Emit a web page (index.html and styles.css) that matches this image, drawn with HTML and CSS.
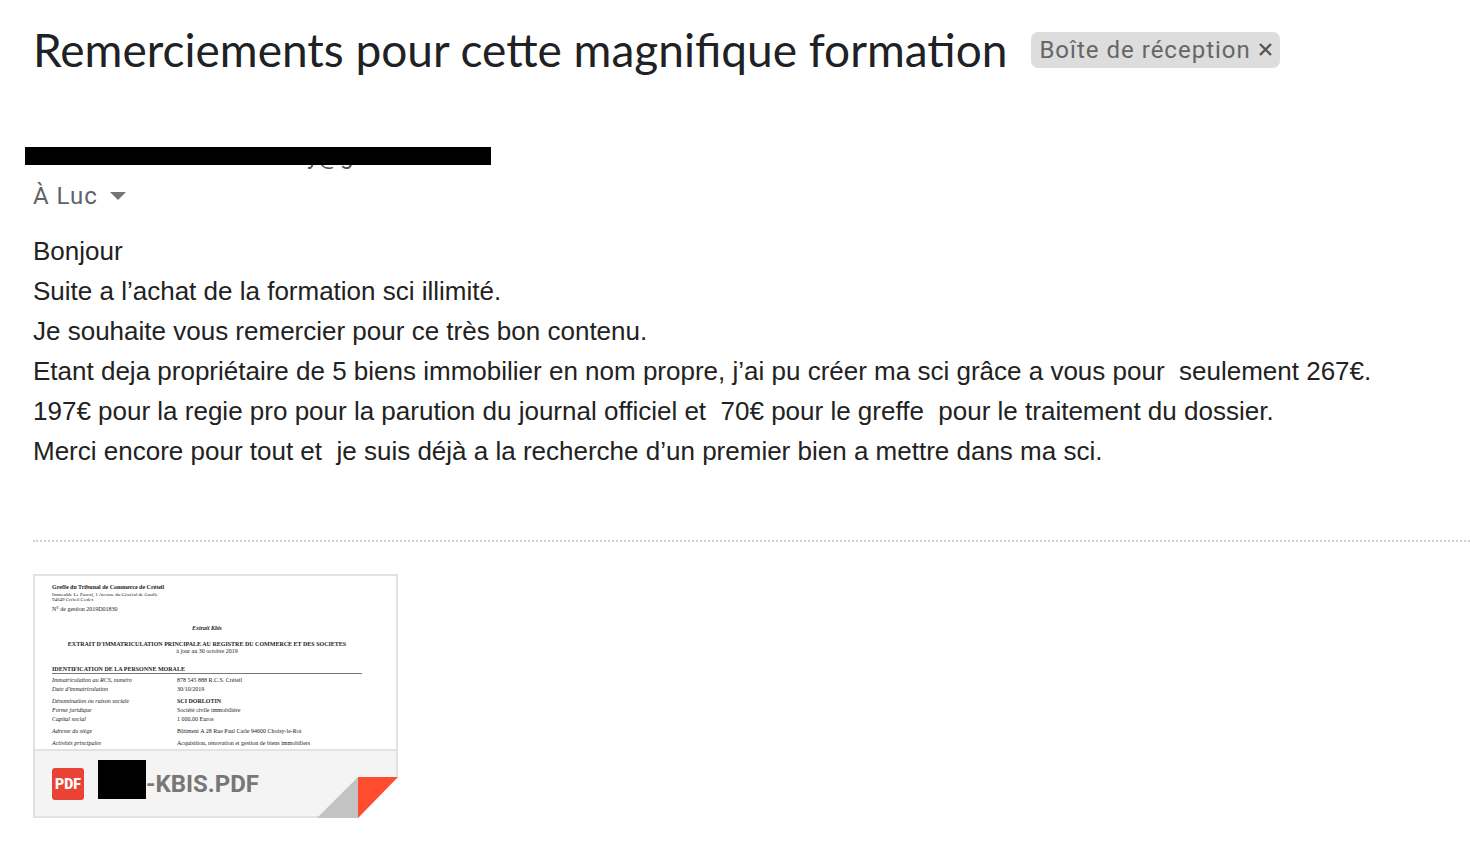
FILE: index.html
```
<!DOCTYPE html>
<html lang="fr">
  <head>
    <meta charset="utf-8">
    <title>Remerciements pour cette magnifique formation</title>
    <link rel="stylesheet" href="styles.css">
  </head>
  <body>
    <div class="mail">
      <header class="subject">
        <h1>Remerciements pour cette magnifique formation</h1>
        <div class="label">
          <span>Boîte de réception</span>
          <button type="button" aria-label="Retirer le libellé">
            <svg width="13" height="13" viewBox="0 0 13 13"><path d="M1 1L12 12M12 1L1 12" stroke="#555" stroke-width="2.4"/></svg>
          </button>
        </div>
      </header>

      <div class="sender">
        <span class="address">y@g</span>
        <div class="mask"></div>
      </div>
      <div class="recipient">
        <span>À Luc</span>
        <button type="button" aria-label="Afficher les détails">
          <svg width="16" height="8" viewBox="0 0 16 8"><path d="M0 0H16L8 8Z" fill="#757575"/></svg>
        </button>
      </div>

      <div class="message">
        <p>Bonjour</p>
        <p>Suite a l’achat de la formation sci illimité.</p>
        <p>Je souhaite vous remercier pour ce très bon contenu.</p>
        <p>Etant deja propriétaire de 5 biens immobilier en nom propre, j’ai pu créer ma sci grâce a vous pour&nbsp; seulement 267€.</p>
        <p>197€ pour la regie pro pour la parution du journal officiel et&nbsp; 70€ pour le greffe&nbsp; pour le traitement du dossier.</p>
        <p>Merci encore pour tout et&nbsp; je suis déjà a la recherche d’un premier bien a mettre dans ma sci.</p>
      </div>

      <div class="attachments">
        <a class="file" href="#">
          <div class="preview">
            <div class="court">Greffe du Tribunal de Commerce de Créteil</div>
            <div class="court-address">Immeuble Le Pascal, 1 Avenue du Général de Gaulle<br>94049 Créteil Cedex</div>
            <div class="reference">N° de gestion 2019D01830</div>
            <div class="kbis">Extrait Kbis</div>
            <div class="extract">EXTRAIT D'IMMATRICULATION PRINCIPALE AU REGISTRE DU COMMERCE ET DES SOCIETES</div>
            <div class="date">à jour au 30 octobre 2019</div>
            <div class="section">IDENTIFICATION DE LA PERSONNE MORALE</div>
            <dl>
              <dt>Immatriculation au RCS, numéro</dt><dd>878 545 888 R.C.S. Créteil</dd>
              <dt>Date d'immatriculation</dt><dd>30/10/2019</dd>
            </dl>
            <dl>
              <dt>Dénomination ou raison sociale</dt><dd><b>SCI DORLOTIN</b></dd>
              <dt>Forme juridique</dt><dd>Société civile immobilière</dd>
              <dt>Capital social</dt><dd>1 000,00 Euros</dd>
            </dl>
            <dl>
              <dt>Adresse du siège</dt><dd>Bâtiment A 28 Rue Paul Carle 94600 Choisy-le-Roi</dd>
            </dl>
            <dl>
              <dt>Activités principales</dt><dd>Acquisition, rénovation et gestion de biens immobiliers</dd>
            </dl>
          </div>
          <div class="file-bar">
            <span class="badge">PDF</span>
            <span class="name-mask"></span>
            <span class="name">-KBIS.PDF</span>
          </div>
          <svg class="fold" width="81" height="41" viewBox="0 0 81 41">
            <path d="M41 41H81V0Z" fill="#fff"/>
            <path d="M0 41L41 0V41Z" fill="#c3c3c3"/>
            <path d="M41 0H81L41 41Z" fill="#ff4b2e"/>
          </svg>
        </a>
      </div>
    </div>
  </body>
</html>
```
FILE: styles.css
```
body {
  margin: 0;
  background: #fff;
  color: #222;
  font-family: Roboto, "Liberation Sans", Arial, sans-serif;
}

button {
  display: flex;
  padding: 0;
  border: none;
  background: none;
  cursor: pointer;
}

.mail {
  padding: 23px 0 24px 33px;
}

/* subject */
.subject {
  display: flex;
  align-items: center;
  gap: 24px;
  height: 53px;
}
.subject h1 {
  margin: 0;
  font-family: "Google Sans", Lato, sans-serif;
  font-size: 46px;
  font-weight: 400;
  line-height: 52px;
  color: #202124;
  white-space: nowrap;
}
.label {
  display: flex;
  align-items: center;
  gap: 8px;
  height: 36px;
  padding: 0 8px;
  border-radius: 7px;
  background: #ddd;
  color: #666;
  font-size: 24px;
  letter-spacing: 1px;
  white-space: nowrap;
}

/* sender */
.sender {
  position: relative;
  height: 28px;
  margin-top: 66px;
}
.address {
  display: block;
  padding-left: 274px;
  font-size: 24px;
  line-height: 28px;
  color: #555;
}
.mask {
  position: absolute;
  top: 5px;
  left: -8px;
  width: 466px;
  height: 18px;
  background: #000;
}
.recipient {
  display: flex;
  align-items: center;
  gap: 12px;
  margin-top: 12px;
  font-size: 24px;
  line-height: 28px;
  letter-spacing: 1px;
  color: #5f6368;
}

/* message */
.message {
  margin-top: 21px;
  font-family: "Liberation Sans", Arial, sans-serif;
  font-size: 26px;
  line-height: 40px;
}
.message p {
  margin: 0;
}

/* attachments */
.attachments {
  margin-top: 69px;
  padding-top: 32px;
  border-top: 2px dotted #d0d0d0;
}
.file {
  position: relative;
  display: block;
  box-sizing: border-box;
  width: 365px;
  border: 2px solid #e2e2e2;
  color: #222;
  text-decoration: none;
}
.preview {
  height: 173px;
  padding: 0 34px 0 17px;
  overflow: hidden;
  font-family: "Liberation Serif", "Times New Roman", serif;
  font-size: 6px;
  line-height: 9px;
  white-space: nowrap;
}
.court {
  padding-top: 7px;
  font-weight: bold;
}
.court-address {
  font-size: 5px;
  line-height: 5px;
}
.reference {
  margin-top: 3px;
}
.kbis {
  margin-top: 10px;
  font-weight: bold;
  font-style: italic;
  text-align: center;
}
.extract {
  margin-top: 8px;
  font-weight: bold;
  line-height: 7px;
  text-align: center;
}
.date {
  line-height: 7px;
  text-align: center;
}
.section {
  margin: 11px 0 2px;
  border-bottom: 1px solid #777;
  font-weight: bold;
  line-height: 7px;
}
.preview dl {
  display: grid;
  grid-template-columns: 125px 1fr;
  margin: 0 0 3px;
}
.preview dl:last-child {
  margin: 0;
}
.preview dt {
  font-style: italic;
}
.preview dd {
  margin: 0;
}
.file-bar {
  display: flex;
  align-items: center;
  height: 65px;
  padding-left: 17px;
  border-top: 2px solid #e2e2e2;
  background: #f4f4f4;
}
.badge {
  width: 32px;
  height: 32px;
  border-radius: 3px;
  background: #ea4335;
  color: #fff;
  font-size: 14px;
  font-weight: 900;
  line-height: 32px;
  text-align: center;
}
.name-mask {
  width: 48px;
  height: 39px;
  margin: -8px 0 0 14px;
  background: #000;
}
.name {
  font-size: 24px;
  font-weight: bold;
  color: #777;
}
.fold {
  position: absolute;
  right: -2px;
  bottom: -2px;
}
```
